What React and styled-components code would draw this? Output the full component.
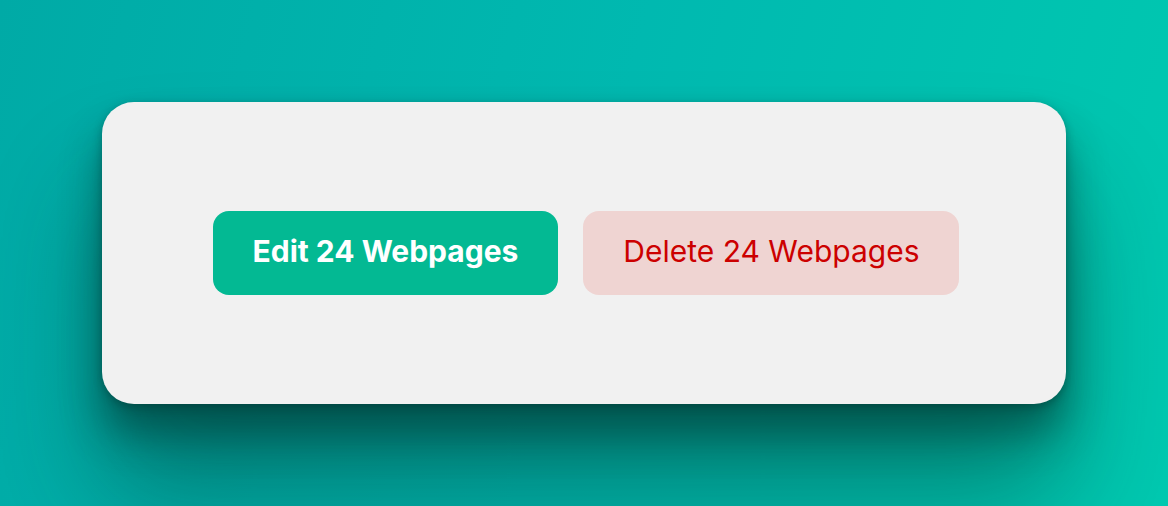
import React from 'react'
import styled, { createGlobalStyle } from 'styled-components';

const GlobalStyle = createGlobalStyle`
    html, body {
        margin: 0;
        padding: 0;
    }
    body {
        font-family: Inter, "Noto Sans", sans-serif;
    }
`;

export default function App() {
    return (
        <>
            <GlobalStyle />
            <PageStyled>
                <Card>
                    <Actions>
                        <ActionButton variant="primary">Edit 24 Webpages</ActionButton>
                        <ActionButton variant="danger">Delete 24 Webpages</ActionButton>
                    </Actions>
                </Card>
            </PageStyled>
        </>
    )
}

const PageStyled = styled.main`
    width: 1168px;
    height: 506px;
    box-sizing: border-box;
    padding-top: 102px;
    padding-left: 102px;
    background: linear-gradient(105deg, #00aaa6 0%, #00b9b0 50%, #00c9b0 100%);
    overflow: hidden;
`;

const Card = styled.section`
    width: 964px;
    height: 302px;
    background-color: #f1f1f1;
    border-radius: 32px;
    display: flex;
    align-items: center;
    justify-content: center;
    box-shadow:
        0 3px 8px rgba(0, 40, 35, 0.35),
        0 30px 40px rgba(0, 35, 30, 0.45),
        0 90px 110px rgba(0, 35, 30, 0.4);
`;

const Actions = styled.div`
    display: flex;
    gap: 25px;
    margin-left: 4px;
`;

const ActionButton = styled.button`
    height: 84px;
    padding: 0 40px 4px;
    border: none;
    border-radius: 16px;
    font-family: Inter, "Noto Sans", sans-serif;
    font-size: 30px;
    cursor: pointer;
    font-weight: ${p => (p.variant === 'primary' ? 700 : 400)};
    color: ${p => (p.variant === 'primary' ? '#ffffff' : '#cc0000')};
    background-color: ${p => (p.variant === 'primary' ? '#03b993' : '#efd4d2')};
`;
